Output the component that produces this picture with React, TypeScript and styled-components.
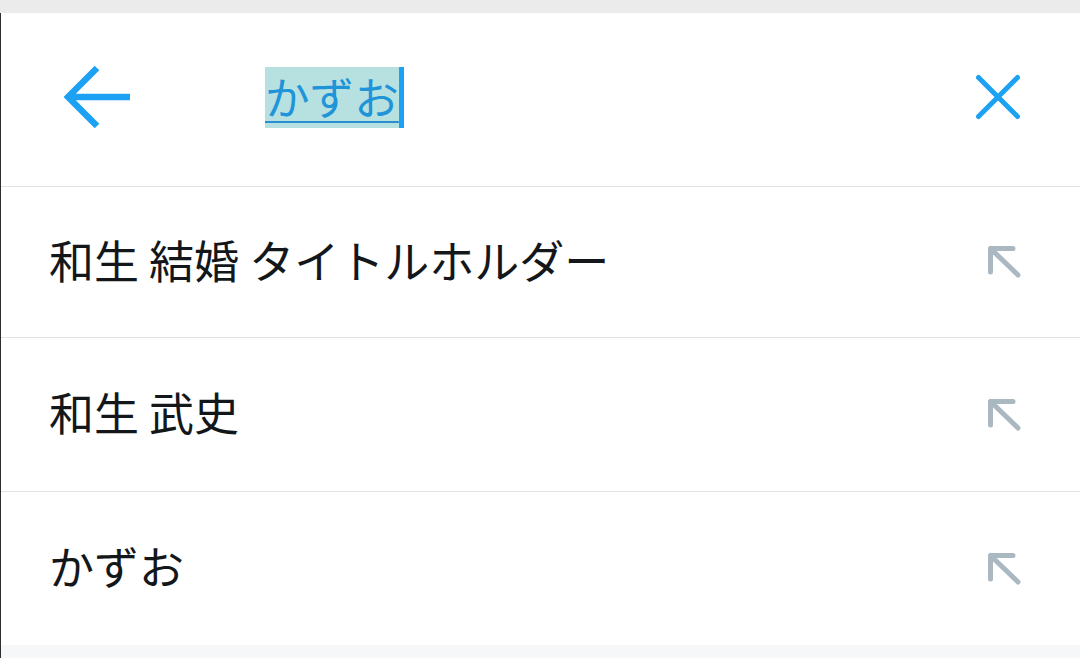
import React from "react";
import styled, { createGlobalStyle } from "styled-components";

const GlobalStyle = createGlobalStyle`
  html, body {
    margin: 0;
    padding: 0;
    background: #ffffff;
  }
  body {
    font-family: "Noto Sans CJK JP", "Noto Sans", sans-serif;
  }
`;

const Page = styled.div`
  width: 1080px;
  height: 658px;
  display: flex;
  flex-direction: column;
  background: #ebebeb;
  overflow: hidden;
`;

const TopStrip = styled.div`
  height: 13px;
  flex: none;
  background: #ebebeb;
`;

const Panel = styled.div`
  flex: 1;
  display: flex;
  flex-direction: column;
  border-left: 1px solid #2e2e2e;
  background: #ffffff;
`;

const Header = styled.header`
  height: 174px;
  flex: none;
  box-sizing: border-box;
  display: flex;
  align-items: center;
  padding: 0 58px 5px 63px;
  border-bottom: 1px solid #dde3e6;
`;

const IconButton = styled.button`
  border: none;
  background: none;
  padding: 0;
  margin: 0;
  display: flex;
  align-items: center;
  justify-content: center;
  cursor: pointer;
`;

const SearchField = styled.div`
  margin-left: 135px;
  flex: 1;
  display: flex;
  align-items: center;
`;

const Selected = styled.span`
  display: inline-block;
  height: 61px;
  line-height: 58px;
  font-size: 44.6px;
  color: #1f94d8;
  background: #b6e1e0;
  text-decoration: underline;
  text-decoration-thickness: 2px;
  text-underline-offset: 6px;
  text-decoration-color: #2a8fd0;
`;

const Caret = styled.span`
  display: inline-block;
  width: 5px;
  height: 61px;
  background: #1da1f2;
`;

const List = styled.ul`
  list-style: none;
  margin: 0;
  padding: 0;
  display: flex;
  flex-direction: column;
`;

const Row = styled.li<{ $h: number; $last?: boolean }>`
  height: ${(p) => p.$h}px;
  box-sizing: content-box;
  display: flex;
  align-items: center;
  padding: 0 58px 0 48px;
  border-bottom: ${(p) => (p.$last ? "none" : "1px solid #dde3e6")};
`;

const RowText = styled.span`
  flex: 1;
  font-size: 45px;
  line-height: 1;
  padding-bottom: 6px;
  color: #14171a;
  white-space: nowrap;
`;

const BottomStrip = styled.div`
  height: 13px;
  flex: none;
  margin-top: auto;
  background: #f6f7f9;
`;

const BackIcon = () => (
  <svg width="66" height="64" viewBox="0 0 66 64" fill="none">
    <path
      d="M33 3 L4 32 L33 61 M5 32 H66"
      stroke="#1da1f2"
      strokeWidth="6.5"
      strokeLinejoin="miter"
    />
  </svg>
);

const CloseIcon = () => (
  <svg width="48" height="48" viewBox="0 0 48 48" fill="none">
    <path
      d="M4.5 4.5 L43.5 43.5 M43.5 4.5 L4.5 43.5"
      stroke="#1da1f2"
      strokeWidth="5"
      strokeLinecap="round"
    />
  </svg>
);

const FillIcon = () => (
  <svg width="36" height="36" viewBox="0 0 36 36" fill="none">
    <path
      d="M4.5 28 V4.5 H27 M4.5 4.5 L32 31"
      stroke="#aab8c2"
      strokeWidth="5"
      strokeLinecap="round"
      strokeLinejoin="round"
    />
  </svg>
);

const suggestions = [
  { text: "和生 結婚 タイトルホルダー", h: 150 },
  { text: "和生 武史", h: 153 },
  { text: "かずお", h: 153 },
];

export default function App() {
  return (
    <>
      <GlobalStyle />
      <Page>
        <TopStrip />
        <Panel>
          <Header>
            <IconButton aria-label="戻る">
              <BackIcon />
            </IconButton>
            <SearchField>
              <Selected>かずお</Selected>
              <Caret />
            </SearchField>
            <IconButton aria-label="クリア">
              <CloseIcon />
            </IconButton>
          </Header>
          <List>
            {suggestions.map((s, i) => (
              <Row key={s.text} $h={s.h} $last={i === suggestions.length - 1}>
                <RowText>{s.text}</RowText>
                <FillIcon />
              </Row>
            ))}
          </List>
          <BottomStrip />
        </Panel>
      </Page>
    </>
  );
}
